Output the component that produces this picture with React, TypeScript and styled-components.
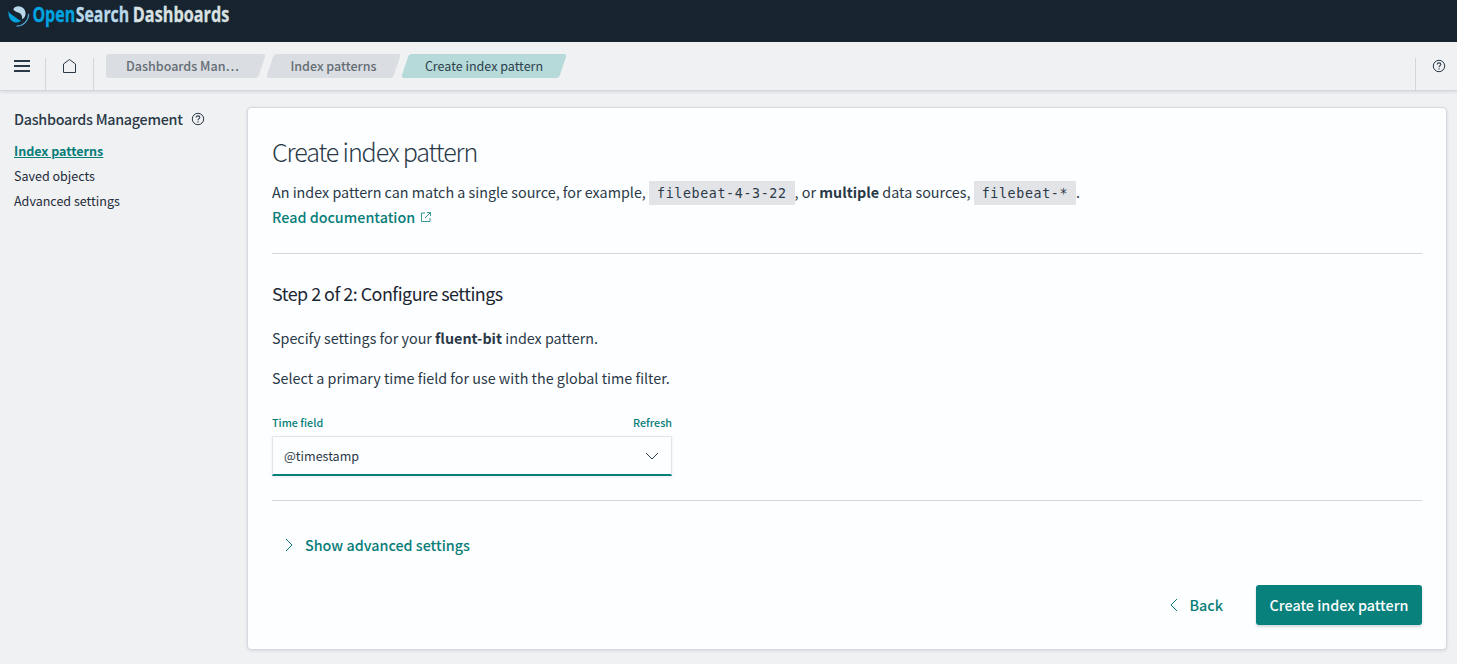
import React from 'react';
import styled, { createGlobalStyle, css } from 'styled-components';

const GlobalStyle = createGlobalStyle`
  *, *::before, *::after { box-sizing: border-box; }
  body {
    margin: 0;
    background: #f0f1f3;
    color: #2a3947;
    font-family: "Noto Sans CJK JP", "Noto Sans", sans-serif;
    font-size: 14.33px;
    line-height: 24px;
  }
`;

const Page = styled.div`
  display: flex;
  flex-direction: column;
  height: 664px;
  overflow: hidden;
`;

const BrandBar = styled.header`
  flex: none;
  height: 42px;
  padding-left: 8px;
  background: #17242f;
`;

const NavBar = styled.nav`
  flex: none;
  display: flex;
  height: 49px;
  border-bottom: 1px solid #d3d7dc;
  box-shadow: 0 1px 3px rgba(80, 95, 115, 0.18);
`;

const NavCell = styled.div<{ $width: number; $side: 'left' | 'right' }>`
  display: flex;
  justify-content: center;
  width: ${p => p.$width}px;
  height: 32px;
  margin-top: 16px;
  ${p => (p.$side === 'right' ? 'border-right: 1px solid #d3d6db; padding-right: 1px;' : 'border-left: 1px solid #d3d6db; padding: 1px 0 0 5px;')}
`;

const Crumbs = styled.ol`
  display: flex;
  gap: 2px;
  flex: 1;
  margin: 12px 0 0 12px;
  padding: 0;
  list-style: none;
`;

const Crumb = styled.li<{ $width: number; $first?: boolean; $current?: boolean }>`
  position: relative;
  z-index: 0;
  width: ${p => p.$width}px;
  height: 24px;
  text-align: center;
  font-size: 12.54px;
  line-height: 24px;
  font-weight: ${p => (p.$current ? 400 : 500)};
  color: ${p => (p.$current ? '#2c3f4c' : '#656d74')};
  &::before {
    content: '';
    position: absolute;
    z-index: -1;
    inset: 0 2.5px 0 3.3px;
    border-radius: 3px;
    transform: skewX(-18.4deg);
    background: ${p => (p.$current ? '#b6dad9' : '#dadde2')};
  }
  ${p => p.$first && css`
    padding-right: 6px;
    &::after {
      content: '';
      position: absolute;
      z-index: -1;
      inset: 0 40px 0 0;
      border-radius: 3px;
      background: #dadde2;
    }
  `}
`;

const Body = styled.div`
  display: flex;
  flex: 1;
  padding: 16px 10px 14px 14px;
`;

const Sidebar = styled.aside`
  width: 233px;
`;

const SideTitle = styled.div`
  display: flex;
  align-items: center;
  gap: 8px;
  height: 24px;
  font-weight: 500;
  letter-spacing: -0.28px;
`;

const SideLink = styled.div<{ $active?: boolean }>`
  height: 25px;
  line-height: 25px;
  font-size: 12.54px;
  color: #1f2c3a;
  ${p => p.$active && css`
    margin-top: 7px;
    color: #077d79;
    font-weight: 700;
    text-decoration: underline;
  `}
`;

const Panel = styled.main`
  width: 1200px;
  height: 543px;
  padding: 24px;
  background: #fdfeff;
  border: 1px solid #d5d9df;
  border-radius: 4px;
  box-shadow: 0 1px 3px rgba(80, 95, 115, 0.15);
`;

const Title = styled.h1`
  margin: 0;
  font-size: 25.07px;
  line-height: 38px;
  font-weight: 300;
  letter-spacing: -1.12px;
`;

const Intro = styled.p`
  height: 25px;
  margin: 9px 0 0;
  line-height: 25px;
  white-space: nowrap;
`;

const Code = styled.code`
  padding: 5px 8px 4px;
  background: #e3e4e8;
  font-family: "DejaVu Sans Mono", monospace;
  font-size: 13.3px;
  letter-spacing: 0.63px;
`;

const Link = styled.a<{ $size?: number }>`
  color: #077d79;
  font-weight: 500;
  ${p => p.$size && css`font-size: ${p.$size}px;`}
`;

const DocLink = styled(Link)`
  display: flex;
  align-items: center;
  gap: 5px;
  height: 25px;
`;

const Rule = styled.hr<{ $top: number }>`
  height: 1px;
  margin: ${p => p.$top}px 0 0;
  border: 0;
  background: #d3d7dd;
`;

const StepTitle = styled.h2`
  margin: 22px 0 0;
  font-size: 17.9px;
  line-height: 34px;
  font-weight: 400;
  letter-spacing: -0.5px;
  color: #1b2733;
`;

const Para = styled.p`
  margin: 16px 0 0;
  line-height: 24px;
`;

const Field = styled.div`
  width: 400px;
  margin-top: 25px;
`;

const FieldHead = styled.div`
  display: flex;
  justify-content: space-between;
  height: 21px;
  line-height: 16px;
`;

const Select = styled.div`
  display: flex;
  align-items: center;
  justify-content: space-between;
  height: 40px;
  padding: 0 12px 0 11px;
  border: 1px solid #e2e5e9;
  border-bottom: 2px solid #087f7b;
  box-shadow: 0 1px 3px rgba(80, 95, 115, 0.12);
  font-size: 12.54px;
`;

const Advanced = styled(Link)`
  display: flex;
  align-items: center;
  gap: 8px;
  height: 24px;
  margin: 32px 0 0 9px;
`;

const Actions = styled.div`
  display: flex;
  justify-content: flex-end;
  align-items: center;
  margin-top: 28px;
`;

const BackButton = styled(Link)`
  display: flex;
  align-items: center;
  gap: 8px;
  margin-right: 33px;
`;

const PrimaryButton = styled.button`
  width: 166px;
  height: 40px;
  padding: 0;
  border: 0;
  border-radius: 3px;
  background: #08817d;
  box-shadow: 0 2px 3px rgba(40, 80, 90, 0.2);
  color: #fdfeff;
  font: 500 14.33px/40px "Noto Sans CJK JP", sans-serif;
`;

const Stroke = styled.svg`
  flex: none;
  fill: none;
  stroke: currentColor;
`;

const Logo = () => (
  <svg width="224" height="34" viewBox="8 0 224 34">
    <path fill="#00a3e0" d="M8.6 11C8 15.4 9.3 19.9 13.6 21.9C17.2 23.2 20 22.3 21 20.3C18.6 20.3 16.6 18 14.3 16.4C12 14.9 9.6 13.9 8.6 11Z" />
    <path fill="#b9d9eb" d="M13.3 9.2C14.3 6.6 18 5.4 21 6.7C24.8 8.3 26.2 12 25.3 15.6C24.6 17.6 23.8 18.6 22 19.2C22.6 16 21.3 13.8 19 12.7C16.8 11.9 14.6 11.5 13.3 9.2Z" />
    <path fill="none" stroke="#4fa9d8" strokeWidth="1.2" strokeLinecap="round" d="M28.7 14.3C28.2 21 23.5 25.9 17 26.1" />
    <g fontFamily="Open Sans, sans-serif" fontWeight="700" fontSize="21.3" strokeWidth="0.3">
      <text transform="translate(32.4 22.2) scale(.75 1)" fill="#00a3e0" stroke="#00a3e0">Open</text>
      <text transform="translate(75.7 22.2) scale(.745 1)" fill="#b9d9eb" stroke="#b9d9eb">Search</text>
      <text transform="translate(132.8 22.2) scale(.763 1)" fill="#d9e1e2" stroke="#d9e1e2">Dashboards</text>
    </g>
  </svg>
);

const HelpIcon = () => (
  <Stroke width="14" height="14" viewBox="0 0 14 14">
    <circle cx="7" cy="7" r="5.7" />
    <path strokeWidth="1.1" d="M5.2 5.5C5.3 4.4 6 3.9 7 3.9C8.1 3.9 8.8 4.5 8.8 5.4C8.8 6.7 7 6.7 7 8.3M7 9.3V10.4" />
  </Stroke>
);

export default function App() {
  return (
    <Page>
      <GlobalStyle />
      <BrandBar><Logo /></BrandBar>
      <NavBar>
        <NavCell $width={46} $side="right">
          <Stroke width="16" height="16" viewBox="0 0 16 16" strokeWidth="2">
            <path d="M0 3H16M0 8H16M0 13H16" />
          </Stroke>
        </NavCell>
        <NavCell $width={48} $side="right">
          <Stroke width="16" height="16" viewBox="0 0 16 16">
            <path d="M2.5 14.5V6L8.5 1.5L14.5 6V14.5Z" />
          </Stroke>
        </NavCell>
        <Crumbs>
          <Crumb $width={159} $first>Dashboards Man…</Crumb>
          <Crumb $width={133}>Index patterns</Crumb>
          <Crumb $width={164} $current>Create index pattern</Crumb>
        </Crumbs>
        <NavCell $width={42} $side="left"><HelpIcon /></NavCell>
      </NavBar>
      <Body>
        <Sidebar>
          <SideTitle>Dashboards Management <HelpIcon /></SideTitle>
          <SideLink $active>Index patterns</SideLink>
          <SideLink>Saved objects</SideLink>
          <SideLink>Advanced settings</SideLink>
        </Sidebar>
        <Panel>
          <Title>Create index pattern</Title>
          <Intro>
            An index pattern can match a single source, for example, <Code>filebeat-4-3-22</Code>, or <b>multiple</b> data sources, <Code>filebeat-*</Code>.
          </Intro>
          <DocLink>
            Read documentation
            <Stroke width="12" height="12" viewBox="0 0 12 12" strokeWidth="0.8">
              <path d="M5 2H1.5V10.5H10V7M7 1.5H10.5V5M10.5 1.5L5 7" />
            </Stroke>
          </DocLink>
          <Rule $top={24} />
          <StepTitle>Step 2 of 2: Configure settings</StepTitle>
          <Para>Specify settings for your <b>fluent-bit</b> index pattern.</Para>
          <Para>Select a primary time field for use with the global time filter.</Para>
          <Field>
            <FieldHead>
              <Link $size={10.75}>Time field</Link>
              <Link $size={10.75}>Refresh</Link>
            </FieldHead>
            <Select>
              @timestamp
              <Stroke width="14" height="14" viewBox="0 0 14 14"><path d="M1 4L7 10L13 4" /></Stroke>
            </Select>
          </Field>
          <Rule $top={24} />
          <Advanced>
            <Stroke width="16" height="16" viewBox="0 0 16 16"><path d="M5 2L11 8L5 14" /></Stroke>
            Show advanced settings
          </Advanced>
          <Actions>
            <BackButton>
              <Stroke width="16" height="16" viewBox="0 0 16 16"><path d="M11 2L5 8L11 14" /></Stroke>
              Back
            </BackButton>
            <PrimaryButton>Create index pattern</PrimaryButton>
          </Actions>
        </Panel>
      </Body>
    </Page>
  );
}
